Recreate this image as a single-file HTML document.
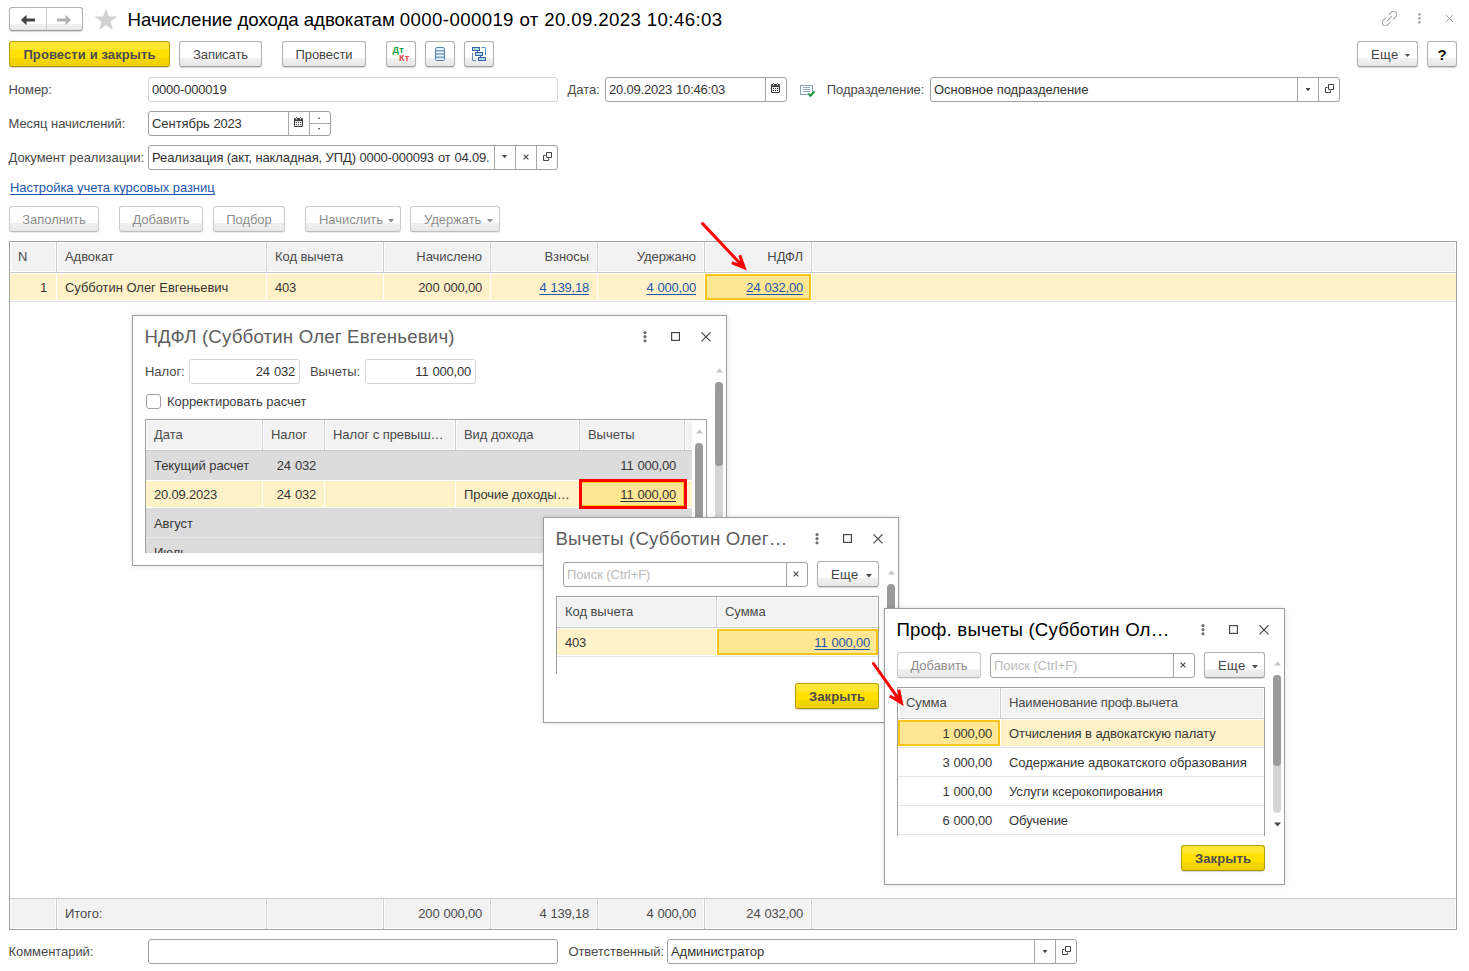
<!DOCTYPE html>
<html lang="ru">
<head>
<meta charset="utf-8">
<title>Начисление дохода адвокатам</title>
<style>
*{box-sizing:border-box;margin:0;padding:0}
html,body{width:1469px;height:971px;overflow:hidden;background:#fff}
body{font-family:"Liberation Sans",Arial,sans-serif;font-size:13px;color:#363636;letter-spacing:-.05px;position:relative}
.abs{position:absolute}
.t{position:absolute;white-space:nowrap;line-height:16px;height:16px}
.lbl{color:#4a4a4a}
.btn{position:absolute;height:26px;border:1px solid #b0b0b0;border-bottom-color:#9c9c9c;border-radius:3px;
 background:linear-gradient(#fff 0,#fff 66.6%,#f1f1f1 66.7%,#e7e7e7 100%);box-shadow:0 1px 1px rgba(0,0,0,.16);
 text-align:center;line-height:25px;color:#444;white-space:nowrap}
.btn.dis{color:#8c8c8c;border-color:#cbcbcb;border-bottom-color:#bdbdbd;box-shadow:0 1px 1px rgba(0,0,0,.08)}
.btn.y{background:linear-gradient(#ffe83a 0,#ffe52c 31%,#ffe000 33%,#ffe000 66.6%,#f3d600 66.7%,#efd100 100%);border-color:#b8a000;border-bottom-color:#a89200;font-weight:bold;color:#4c4c4c;letter-spacing:.1px}
.inp{position:absolute;height:25px;border:1px solid #a0a0a0;border-radius:3px;background:#fff;line-height:24px;padding-left:3px;white-space:nowrap;overflow:hidden;color:#333}
.inp.lt{border-color:#d4d4d4}
.inp .sep{position:absolute;top:0;bottom:0;width:1px;background:#a8a8a8}
.arr{position:absolute;width:6px;height:3.5px;color:#4d4d4d;background:currentColor;clip-path:polygon(0 0,100% 0,50% 100%)}
.arr.s{width:5px;height:3.2px;color:#444}
a.lnk{color:#2456ae;text-decoration:underline;text-decoration-skip-ink:none;text-underline-offset:1.5px;text-decoration-thickness:1px}
.hdr{position:absolute;background:#f2f2f2;color:#4f4f4f;line-height:29px;height:29px;white-space:nowrap;overflow:hidden}
.cell{position:absolute;white-space:nowrap;overflow:hidden}
.r{text-align:right}
.num{letter-spacing:-.2px;word-spacing:.6px}
.win{position:absolute;background:#fff;border:1px solid #9e9e9e;box-shadow:0 0 5px rgba(0,0,0,.13)}
.wt{position:absolute;white-space:nowrap;font-size:18.67px;line-height:24px;height:24px;color:#5e5e5e;letter-spacing:.17px;margin-left:-.6px}
</style>
</head>
<body>

<!-- ===== title bar ===== -->
<div class="btn" style="left:9px;top:7px;width:74px;height:24px;background:linear-gradient(#fff 0,#fff 72%,#f1f1f1 73%,#e7e7e7 100%)"></div>
<div class="abs" style="left:46px;top:8px;width:1px;height:22px;background:#d0d0d0"></div>
<svg class="abs" style="left:20px;top:13.5px" width="16" height="12" viewBox="0 0 16 12"><path d="M0.8 6 L6.6 0.8 V4.6 H15 V7.4 H6.6 V11.2 Z" fill="#454545"/></svg>
<svg class="abs" style="left:56px;top:13.5px" width="16" height="12" viewBox="0 0 16 12"><path d="M15.2 6 L9.4 0.8 V4.6 H1 V7.4 H9.4 V11.2 Z" fill="#b0b0b0"/></svg>
<svg class="abs" style="left:93.5px;top:7.5px" width="24" height="23" viewBox="0 0 24 23"><path d="M12 0.5 L14.8 8.6 H23.3 L16.4 13.7 L19 22 L12 17 L5 22 L7.6 13.7 L0.7 8.6 H9.2 Z" fill="#d0d0d0"/></svg>
<div class="t" style="left:127.6px;top:8px;font-size:18.67px;line-height:24px;height:24px;color:#000">Начисление дохода адвокатам <span style="letter-spacing:.37px">0000-000019 от 20.09.2023 10:46:03</span></div>

<svg class="abs" style="left:1382px;top:11px" width="15" height="15" viewBox="0 0 15 15"><g transform="rotate(-45 7.5 7.5)" fill="none" stroke="#aaa4a4" stroke-width="1.1" stroke-linecap="round"><path d="M5.2 4.4 H1.6 A3.1 3.1 0 0 0 1.6 10.6 H5.2"/><path d="M9.8 4.4 H13.4 A3.1 3.1 0 0 1 13.4 10.6 H9.8"/><path d="M4.6 7.5 H10.4"/></g></svg>
<svg class="abs" style="left:1418px;top:13px" width="3" height="11" viewBox="0 0 3 11"><g fill="#aaa6a6"><circle cx="1.5" cy="1.4" r="1.3"/><circle cx="1.5" cy="5.4" r="1.3"/><circle cx="1.5" cy="9.4" r="1.3"/></g></svg>
<svg class="abs" style="left:1446px;top:15px" width="7" height="7" viewBox="0 0 7 7"><path d="M0 0 L7 7 M7 0 L0 7" stroke="#a4a0a0" stroke-width="1" fill="none"/></svg>
<!-- ===== command bar ===== -->
<div class="btn y" style="left:9px;top:41px;width:161px">Провести и закрыть</div>
<div class="btn" style="left:179px;top:41px;width:83px">Записать</div>
<div class="btn" style="left:282px;top:41px;width:84px">Провести</div>
<div class="btn" style="left:386px;top:41px;width:30px"></div>
<div class="t" style="left:392.5px;top:45px;font-size:9px;font-weight:bold;color:#0d9a3c;line-height:10px;height:10px;letter-spacing:.3px">Д<span style="font-size:9.2px">т</span></div>
<div class="t" style="left:399px;top:53px;font-size:9px;font-weight:bold;color:#ef4444;line-height:10px;height:10px;letter-spacing:.3px">К<span style="font-size:9.2px">т</span></div>
<div class="btn" style="left:425px;top:41px;width:30px"></div>
<svg class="abs" style="left:435px;top:47px" width="10" height="14" viewBox="0 0 10 14"><rect x="0.5" y="0.5" width="9" height="13" rx="1.2" fill="#c9e8ee" stroke="#5f82b2"/><path d="M0.5 3.8 H9.5 M0.5 7 H9.5 M0.5 10.2 H9.5" stroke="#5f82b2" stroke-width="1"/><path d="M1.5 2.2 H8.5 M1.5 5.4 H8.5 M1.5 8.6 H8.5 M1.5 11.8 H8.5" stroke="#eefafc" stroke-width="1"/></svg>
<div class="btn" style="left:464px;top:41px;width:30px"></div>
<svg class="abs" style="left:472px;top:47px" width="14" height="14" viewBox="0 0 14 14"><path d="M9.5 0.5 H13.5 V8 M0.5 6 V13.5 H4" fill="none" stroke="#5d8fb8" stroke-width="1"/><path d="M5.5 3.5 V5 M8.5 8.5 V10" stroke="#3b63a8" stroke-width="1"/><g fill="#a9dbe3" stroke="#3b63a8" stroke-width="1"><rect x="0.5" y="0.5" width="7" height="3"/><rect x="3.5" y="5.5" width="7" height="3"/><rect x="6.5" y="10.5" width="7" height="3"/></g></svg>
<div class="btn" style="left:1357px;top:41px;width:61px;text-align:left;padding-left:13px"><span style="letter-spacing:.4px">Еще</span></div>
<div class="arr" style="left:1404.5px;top:53.5px"></div>
<div class="btn" style="left:1427px;top:41px;width:30px;font-weight:bold;color:#111;font-size:15px">?</div>


<!-- icons defs -->
<svg width="0" height="0" style="position:absolute">
 <defs>
  <g id="i-open"><path d="M3.5 0.5 H8.5 V5.5 H3.5 Z M2.5 3.5 H0.5 V8.5 H5.5 V6.5" fill="none" stroke="#444" stroke-width="1"/></g>
  <g id="i-x"><path d="M0.6 0.6 L5.4 5.4 M5.4 0.6 L0.6 5.4" fill="none" stroke="#505050" stroke-width="1.25"/></g>
  <g id="i-cal"><rect x="0" y="1" width="9" height="9" rx="1" fill="#3c3c3c"/><rect x="1.1" y="4.1" width="6.8" height="4.9" fill="#fff"/><circle cx="2.5" cy="1.7" r="0.8" fill="#fff"/><circle cx="6.5" cy="1.7" r="0.8" fill="#fff"/><rect x="2.1" y="0" width="0.8" height="1.2" fill="#3c3c3c"/><rect x="6.1" y="0" width="0.8" height="1.2" fill="#3c3c3c"/><g fill="#3c3c3c"><rect x="1.9" y="4.9" width="1.1" height="1.1"/><rect x="3.95" y="4.9" width="1.1" height="1.1"/><rect x="6" y="4.9" width="1.1" height="1.1"/><rect x="1.9" y="7" width="1.1" height="1.1"/><rect x="3.95" y="7" width="1.1" height="1.1"/><rect x="6" y="7" width="1.1" height="1.1"/></g></g>
 </defs>
</svg>

<!-- ===== fields ===== -->
<div class="t lbl" style="left:8.5px;top:82px">Номер:</div>
<div class="inp lt" style="left:148px;top:77px;width:410px"><span class="num">0000-000019</span></div>

<div class="t lbl" style="left:567.5px;top:82px">Дата:</div>
<div class="inp" style="left:605px;top:77px;width:182px"><span class="num">20.09.2023 10:46:03</span><i class="sep" style="left:159px"></i></div>
<svg class="abs" style="left:771px;top:83px" width="9" height="10"><use href="#i-cal"/></svg>
<svg class="abs" style="left:800px;top:85px" width="16" height="13" viewBox="0 0 16 13"><rect x="0.5" y="0.5" width="12" height="9" fill="#fbfcfd" stroke="#86a0ba"/><path d="M3 2.5 H10 M3 4.5 H10 M3 6.5 H10" stroke="#86a0ba" stroke-width="0.9"/><path d="M8.4 8.6 L10.5 10.8 L14.6 6.4" fill="none" stroke="#1b9a33" stroke-width="2"/></svg>
<div class="t lbl" style="left:826.7px;top:82px">Подразделение:</div>
<div class="inp" style="left:930px;top:77px;width:410px">Основное подразделение<i class="sep" style="left:366px"></i><i class="sep" style="left:387px"></i></div>
<div class="arr s" style="left:1305.5px;top:88px"></div>
<svg class="abs" style="left:1325px;top:84px" width="9" height="9"><use href="#i-open"/></svg>

<div class="t lbl" style="left:8.5px;top:116px">Месяц начислений:</div>
<div class="inp" style="left:148px;top:111px;width:183px">Сентябрь <span class="num">2023</span><i class="sep" style="left:139px"></i><i class="sep" style="left:160px"></i><i class="abs" style="left:161px;top:11px;width:21px;height:1px;background:#a8a8a8"></i></div>
<svg class="abs" style="left:294px;top:117px" width="9" height="10"><use href="#i-cal"/></svg>
<div class="abs" style="left:317.8px;top:117px;width:0;height:0;border-left:1.7px solid transparent;border-right:1.7px solid transparent;border-bottom:2.2px solid #4a3a3a"></div>
<div class="abs" style="left:317.8px;top:128px;width:0;height:0;border-left:1.7px solid transparent;border-right:1.7px solid transparent;border-top:2.2px solid #4a3a3a"></div>

<div class="t lbl" style="left:8.5px;top:150px">Документ реализации:</div>
<div class="inp" style="left:148px;top:145px;width:410px"><span style="letter-spacing:-.1px">Реализация (акт, накладная, УПД) </span><span class="num">0000-000093 от 04.09.</span><i class="sep" style="left:345px"></i><i class="sep" style="left:366px"></i><i class="sep" style="left:387px"></i></div>
<div class="arr s" style="left:502px;top:155px"></div>
<svg class="abs" style="left:523px;top:154px" width="6" height="6"><use href="#i-x"/></svg>
<svg class="abs" style="left:543px;top:152px" width="9" height="9"><use href="#i-open"/></svg>

<a class="lnk t" style="left:10px;top:180px">Настройка учета курсовых разниц</a>

<!-- ===== table command bar ===== -->
<div class="btn dis" style="left:9px;top:206px;width:90px">Заполнить</div>
<div class="btn dis" style="left:119px;top:206px;width:84px">Добавить</div>
<div class="btn dis" style="left:213px;top:206px;width:72px">Подбор</div>
<div class="btn dis" style="left:305px;top:206px;width:96px;text-align:left;padding-left:13px">Начислить</div>
<div class="arr" style="left:388px;top:219px;color:#8c8c8c"></div>
<div class="btn dis" style="left:410px;top:206px;width:90px;text-align:left;padding-left:13px">Удержать</div>
<div class="arr" style="left:487px;top:219px;color:#8c8c8c"></div>

<!-- ===== bottom fields ===== -->
<div class="t lbl" style="left:8.5px;top:944px">Комментарий:</div>
<div class="inp" style="left:148px;top:939px;width:410px"></div>
<div class="t lbl" style="left:568.4px;top:944px">Ответственный:</div>
<div class="inp" style="left:667px;top:939px;width:410px">Администратор<i class="sep" style="left:366px"></i><i class="sep" style="left:387px"></i></div>
<div class="arr s" style="left:1042.5px;top:950px"></div>
<svg class="abs" style="left:1062px;top:946px" width="9" height="9"><use href="#i-open"/></svg>


<!-- ===== main table ===== -->
<div class="abs" style="left:9px;top:241px;width:1448px;height:689px;border:1px solid #a0a0a0;background:#fff"></div>
<div class="abs" style="left:11px;top:243px;width:44px;height:28px;background:#f2f2f2"></div>
<div class="abs" style="left:11px;top:899px;width:44px;height:29px;background:#f2f2f2"></div>
<div class="abs" style="left:58px;top:243px;width:207px;height:28px;background:#f2f2f2"></div>
<div class="abs" style="left:58px;top:899px;width:207px;height:29px;background:#f2f2f2"></div>
<div class="abs" style="left:268px;top:243px;width:114px;height:28px;background:#f2f2f2"></div>
<div class="abs" style="left:268px;top:899px;width:114px;height:29px;background:#f2f2f2"></div>
<div class="abs" style="left:385px;top:243px;width:104px;height:28px;background:#f2f2f2"></div>
<div class="abs" style="left:385px;top:899px;width:104px;height:29px;background:#f2f2f2"></div>
<div class="abs" style="left:492px;top:243px;width:104px;height:28px;background:#f2f2f2"></div>
<div class="abs" style="left:492px;top:899px;width:104px;height:29px;background:#f2f2f2"></div>
<div class="abs" style="left:599px;top:243px;width:104px;height:28px;background:#f2f2f2"></div>
<div class="abs" style="left:599px;top:899px;width:104px;height:29px;background:#f2f2f2"></div>
<div class="abs" style="left:706px;top:243px;width:104px;height:28px;background:#f2f2f2"></div>
<div class="abs" style="left:706px;top:899px;width:104px;height:29px;background:#f2f2f2"></div>
<div class="abs" style="left:813px;top:243px;width:642px;height:28px;background:#f2f2f2"></div>
<div class="abs" style="left:813px;top:899px;width:642px;height:29px;background:#f2f2f2"></div>
<div class="abs" style="left:56px;top:242px;width:1px;height:30px;background:#cdcdcd"></div>
<div class="abs" style="left:56px;top:899px;width:1px;height:30px;background:#cdcdcd"></div>
<div class="abs" style="left:266px;top:242px;width:1px;height:30px;background:#cdcdcd"></div>
<div class="abs" style="left:266px;top:899px;width:1px;height:30px;background:#cdcdcd"></div>
<div class="abs" style="left:383px;top:242px;width:1px;height:30px;background:#cdcdcd"></div>
<div class="abs" style="left:383px;top:899px;width:1px;height:30px;background:#cdcdcd"></div>
<div class="abs" style="left:490px;top:242px;width:1px;height:30px;background:#cdcdcd"></div>
<div class="abs" style="left:490px;top:899px;width:1px;height:30px;background:#cdcdcd"></div>
<div class="abs" style="left:597px;top:242px;width:1px;height:30px;background:#cdcdcd"></div>
<div class="abs" style="left:597px;top:899px;width:1px;height:30px;background:#cdcdcd"></div>
<div class="abs" style="left:704px;top:242px;width:1px;height:30px;background:#cdcdcd"></div>
<div class="abs" style="left:704px;top:899px;width:1px;height:30px;background:#cdcdcd"></div>
<div class="abs" style="left:811px;top:242px;width:1px;height:30px;background:#cdcdcd"></div>
<div class="abs" style="left:811px;top:899px;width:1px;height:30px;background:#cdcdcd"></div>
<div class="abs" style="left:10px;top:272px;width:1446px;height:1px;background:#c9c9c9"></div>
<div class="abs" style="left:10px;top:898px;width:1446px;height:1px;background:#c9c9c9"></div>
<div class="abs" style="left:10px;top:274px;width:1446px;height:26px;background:#fff2c8"></div>
<div class="abs" style="left:56px;top:274px;width:1px;height:26px;background:#fff"></div>
<div class="abs" style="left:266px;top:274px;width:1px;height:26px;background:#fff"></div>
<div class="abs" style="left:383px;top:274px;width:1px;height:26px;background:#fff"></div>
<div class="abs" style="left:490px;top:274px;width:1px;height:26px;background:#fff"></div>
<div class="abs" style="left:597px;top:274px;width:1px;height:26px;background:#fff"></div>
<div class="abs" style="left:704px;top:274px;width:1px;height:26px;background:#fff"></div>
<div class="abs" style="left:811px;top:274px;width:1px;height:26px;background:#fff"></div>
<div class="abs" style="left:10px;top:301px;width:1446px;height:1px;background:#e6e6e6"></div>
<div class="abs" style="left:705px;top:274px;width:106px;height:26px;background:#ffe794;border:2px solid #f8c51c"></div>
<div class="t " style="left:18px;top:249px;color:#4a4a4a">N</div>
<div class="t " style="left:65px;top:249px;color:#4a4a4a">Адвокат</div>
<div class="t " style="left:275px;top:249px;color:#4a4a4a">Код вычета</div>
<div class="t r " style="right:987px;top:249px;color:#4a4a4a">Начислено</div>
<div class="t r " style="right:880px;top:249px;color:#4a4a4a">Взносы</div>
<div class="t r " style="right:773px;top:249px;color:#4a4a4a">Удержано</div>
<div class="t r " style="right:666px;top:249px;color:#4a4a4a">НДФЛ</div>
<div class="t r num" style="right:1422px;top:280px;">1</div>
<div class="t " style="left:65px;top:280px;">Субботин Олег Евгеньевич</div>
<div class="t num" style="left:275px;top:280px;">403</div>
<div class="t r num" style="right:987px;top:280px;">200 000,00</div>
<div class="t r num" style="right:880px;top:280px;"><a class="lnk">4 139,18</a></div>
<div class="t r num" style="right:773px;top:280px;"><a class="lnk">4 000,00</a></div>
<div class="t r num" style="right:666px;top:280px;"><a class="lnk">24 032,00</a></div>
<div class="t " style="left:65px;top:906px;color:#4a4a4a">Итого:</div>
<div class="t r num" style="right:987px;top:906px;color:#4a4a4a">200 000,00</div>
<div class="t r num" style="right:880px;top:906px;color:#4a4a4a">4 139,18</div>
<div class="t r num" style="right:773px;top:906px;color:#4a4a4a">4 000,00</div>
<div class="t r num" style="right:666px;top:906px;color:#4a4a4a">24 032,00</div>

<div class="win" style="left:132px;top:315px;width:595px;height:251px;z-index:10">
<div class="t wt" style="left:12px;top:9px;">НДФЛ (Субботин Олег Евгеньевич)</div>
<svg class="abs" style="left:509.6px;top:15px" width="4" height="12" viewBox="0 0 4 12"><g fill="#707070"><circle cx="2" cy="1.6" r="1.6"/><circle cx="2" cy="5.7" r="1.6"/><circle cx="2" cy="9.8" r="1.6"/></g></svg>
<svg class="abs" style="left:538px;top:16px" width="9" height="9" viewBox="0 0 9 9"><rect x="0.6" y="0.6" width="7.8" height="7.8" fill="none" stroke="#4a4a4a" stroke-width="1.2"/></svg>
<svg class="abs" style="left:568px;top:16px" width="10" height="10" viewBox="0 0 10 10"><path d="M0.5 0.3 L9.5 9.3 M9.5 0.3 L0.5 9.3" stroke="#4a4a4a" stroke-width="1.15" fill="none"/></svg>
<div class="t lbl" style="left:12px;top:48px;">Налог:</div>
<div class="inp lt num r" style="left:56px;top:43px;width:111px;padding-right:4px">24 032</div>
<div class="t lbl" style="left:177px;top:48px;">Вычеты:</div>
<div class="inp lt num r" style="left:232px;top:43px;width:111px;padding-right:4px">11 000,00</div>
<div class="abs" style="left:13px;top:78px;width:15px;height:15px;border:1px solid #a0a0a0;border-radius:3px;background:#fff"></div>
<div class="t " style="left:34px;top:78px;color:#3c3c3c">Корректировать расчет</div>
<svg class="abs" style="left:582.5px;top:51.69999999999999px" width="7" height="5" viewBox="0 0 7 5"><path d="M0 4.5 L3.5 0.5 L7 4.5 Z" fill="#c4c4c4"/></svg>
<div class="abs" style="left:582px;top:66px;width:8px;height:170px;background:#d4d4d4;border-radius:4px"></div>
<div class="abs" style="left:582px;top:66px;width:8px;height:84px;background:#9a9a9a;border-radius:4px"></div>
<div class="abs" style="left:12px;top:103px;width:562px;height:134px;border:1px solid #a0a0a0;border-bottom:none;background:#fff"></div>
<div class="abs" style="left:14px;top:105px;width:114px;height:28px;background:#f2f2f2"></div>
<div class="abs" style="left:131px;top:105px;width:59px;height:28px;background:#f2f2f2"></div>
<div class="abs" style="left:193px;top:105px;width:128px;height:28px;background:#f2f2f2"></div>
<div class="abs" style="left:324px;top:105px;width:121px;height:28px;background:#f2f2f2"></div>
<div class="abs" style="left:448px;top:105px;width:102px;height:28px;background:#f2f2f2"></div>
<div class="abs" style="left:553px;top:105px;width:6px;height:28px;background:#f2f2f2"></div>
<div class="abs" style="left:129px;top:104px;width:1px;height:30px;background:#cdcdcd"></div>
<div class="abs" style="left:191px;top:104px;width:1px;height:30px;background:#cdcdcd"></div>
<div class="abs" style="left:322px;top:104px;width:1px;height:30px;background:#cdcdcd"></div>
<div class="abs" style="left:446px;top:104px;width:1px;height:30px;background:#cdcdcd"></div>
<div class="abs" style="left:551px;top:104px;width:1px;height:30px;background:#cdcdcd"></div>
<div class="t " style="left:21px;top:111px;color:#4a4a4a">Дата</div>
<div class="t " style="left:138px;top:111px;color:#4a4a4a">Налог</div>
<div class="t " style="left:200px;top:111px;color:#4a4a4a">Налог с превыш…</div>
<div class="t " style="left:331px;top:111px;color:#4a4a4a">Вид дохода</div>
<div class="t " style="left:455px;top:111px;color:#4a4a4a">Вычеты</div>
<div class="abs" style="left:13px;top:134px;width:546px;height:1px;background:#c9c9c9"></div>
<div class="abs" style="left:13px;top:135px;width:546px;height:29px;background:#dcdcdc"></div>
<div class="abs" style="left:13px;top:165px;width:546px;height:26px;background:#fff2c8"></div>
<div class="abs" style="left:129px;top:165px;width:1px;height:26px;background:#fff"></div>
<div class="abs" style="left:191px;top:165px;width:1px;height:26px;background:#fff"></div>
<div class="abs" style="left:322px;top:165px;width:1px;height:26px;background:#fff"></div>
<div class="abs" style="left:446px;top:165px;width:1px;height:26px;background:#fff"></div>
<div class="abs" style="left:551px;top:165px;width:1px;height:26px;background:#fff"></div>
<div class="abs" style="left:13px;top:192px;width:546px;height:29px;background:#dcdcdc"></div>
<div class="abs" style="left:13px;top:221px;width:546px;height:1px;background:#e8e8e8"></div>
<div class="abs" style="left:13px;top:222px;width:546px;height:15px;background:#dcdcdc"></div>
<svg class="abs" style="left:562.5px;top:112.69999999999999px" width="7" height="5" viewBox="0 0 7 5"><path d="M0 4.5 L3.5 0.5 L7 4.5 Z" fill="#c4c4c4"/></svg>
<div class="abs" style="left:562px;top:127px;width:8px;height:100px;background:#9a9a9a;border-radius:4px"></div>
<div class="t " style="left:21px;top:142px;">Текущий расчет</div>
<div class="t r num" style="right:410px;top:142px;">24 032</div>
<div class="t r num" style="right:50px;top:142px;">11 000,00</div>
<div class="t num" style="left:21px;top:171px;">20.09.2023</div>
<div class="t r num" style="right:410px;top:171px;">24 032</div>
<div class="t " style="left:331px;top:171px;">Прочие доходы…</div>
<div class="abs" style="left:447px;top:165px;width:105px;height:26px;background:#ffe794;border:2px solid #f8c51c"></div>
<div class="abs" style="left:446px;top:163px;width:108px;height:30px;border:3px solid #ff0000"></div>
<div class="t r num" style="right:50px;top:171px;"><a class="lnk" style="color:#333">11 000,00</a></div>
<div class="t " style="left:21px;top:200px;">Август</div>
<div class="abs" style="left:13px;top:224px;width:200px;height:13px;overflow:hidden"><div class="t" style="left:8px;top:5px">Июль</div></div>
</div>

<div class="win" style="left:543px;top:517px;width:356px;height:206px;z-index:20">
<div class="t wt" style="left:12px;top:9px;">Вычеты (Субботин Олег…</div>
<svg class="abs" style="left:270.5px;top:15px" width="4" height="12" viewBox="0 0 4 12"><g fill="#707070"><circle cx="2" cy="1.6" r="1.6"/><circle cx="2" cy="5.7" r="1.6"/><circle cx="2" cy="9.8" r="1.6"/></g></svg>
<svg class="abs" style="left:299px;top:16px" width="9" height="9" viewBox="0 0 9 9"><rect x="0.6" y="0.6" width="7.8" height="7.8" fill="none" stroke="#4a4a4a" stroke-width="1.2"/></svg>
<svg class="abs" style="left:329px;top:16px" width="10" height="10" viewBox="0 0 10 10"><path d="M0.5 0.3 L9.5 9.3 M9.5 0.3 L0.5 9.3" stroke="#4a4a4a" stroke-width="1.15" fill="none"/></svg>
<div class="inp " style="left:19px;top:44px;width:245px;"><span style="color:#b9b9b9">Поиск (Ctrl+F)</span><i class="sep" style="left:222px"></i></div>
<svg class="abs" style="left:249px;top:53px" width="6" height="6" viewBox="0 0 6 6"><use href="#i-x"/></svg>
<div class="btn " style="left:273px;top:43px;width:62px;height:26px;text-align:left;padding-left:13px"><span style="letter-spacing:.4px">Еще</span></div>
<div class="arr" style="left:322px;top:56px;color:#4d4d4d"></div>
<svg class="abs" style="left:344px;top:52px" width="7" height="5" viewBox="0 0 7 5"><path d="M0 4.5 L3.5 0.5 L7 4.5 Z" fill="#c4c4c4"/></svg>
<div class="abs" style="left:343px;top:66px;width:8px;height:60px;background:#9a9a9a;border-radius:4px"></div>
<div class="abs" style="left:12px;top:78px;width:323px;height:78px;border:1px solid #a0a0a0;border-bottom:none;background:#fff"></div>
<div class="abs" style="left:14px;top:80px;width:157px;height:28px;background:#f2f2f2"></div>
<div class="abs" style="left:174px;top:80px;width:159px;height:28px;background:#f2f2f2"></div>
<div class="abs" style="left:172px;top:79px;width:1px;height:30px;background:#cdcdcd"></div>
<div class="t " style="left:21px;top:86px;color:#4a4a4a">Код вычета</div>
<div class="t " style="left:181px;top:86px;color:#4a4a4a">Сумма</div>
<div class="abs" style="left:13px;top:109px;width:321px;height:1px;background:#c9c9c9"></div>
<div class="abs" style="left:13px;top:111px;width:321px;height:26px;background:#fff2c8"></div>
<div class="abs" style="left:172px;top:111px;width:1px;height:26px;background:#fff"></div>
<div class="abs" style="left:13px;top:138px;width:321px;height:1px;background:#e6e6e6"></div>
<div class="abs" style="left:173px;top:111px;width:161px;height:26px;background:#ffe794;border:2px solid #f8c51c"></div>
<div class="t num" style="left:21px;top:117px;">403</div>
<div class="t r num" style="right:28px;top:117px;"><a class="lnk">11 000,00</a></div>
<div class="btn y" style="left:251px;top:165px;width:84px;height:26px;">Закрыть</div>
</div>

<div class="win" style="left:884px;top:608px;width:401px;height:277px;z-index:30">
<div class="t wt" style="left:12px;top:9px;color:#000">Проф. вычеты (Субботин Ол…</div>
<svg class="abs" style="left:315.5px;top:15px" width="4" height="12" viewBox="0 0 4 12"><g fill="#707070"><circle cx="2" cy="1.6" r="1.6"/><circle cx="2" cy="5.7" r="1.6"/><circle cx="2" cy="9.8" r="1.6"/></g></svg>
<svg class="abs" style="left:344px;top:16px" width="9" height="9" viewBox="0 0 9 9"><rect x="0.6" y="0.6" width="7.8" height="7.8" fill="none" stroke="#4a4a4a" stroke-width="1.2"/></svg>
<svg class="abs" style="left:374px;top:16px" width="10" height="10" viewBox="0 0 10 10"><path d="M0.5 0.3 L9.5 9.3 M9.5 0.3 L0.5 9.3" stroke="#4a4a4a" stroke-width="1.15" fill="none"/></svg>
<div class="btn dis" style="left:12px;top:43px;width:84px;height:26px;">Добавить</div>
<div class="inp " style="left:105px;top:44px;width:205px;"><span style="color:#b9b9b9">Поиск (Ctrl+F)</span><i class="sep" style="left:182px"></i></div>
<svg class="abs" style="left:295px;top:53px" width="6" height="6" viewBox="0 0 6 6"><use href="#i-x"/></svg>
<div class="btn " style="left:319px;top:43px;width:61px;height:26px;text-align:left;padding-left:13px"><span style="letter-spacing:.4px">Еще</span></div>
<div class="arr" style="left:367px;top:56px;color:#4d4d4d"></div>
<svg class="abs" style="left:389px;top:52px" width="7" height="5" viewBox="0 0 7 5"><path d="M0 4.5 L3.5 0.5 L7 4.5 Z" fill="#c4c4c4"/></svg>
<div class="abs" style="left:388px;top:66px;width:8px;height:138px;background:#d4d4d4;border-radius:4px"></div>
<div class="abs" style="left:388px;top:66px;width:8px;height:91px;background:#9a9a9a;border-radius:4px"></div>
<svg class="abs" style="left:389px;top:213px" width="7" height="5" viewBox="0 0 7 5"><path d="M0 0.5 L3.5 4.5 L7 0.5 Z" fill="#444"/></svg>
<div class="abs" style="left:12px;top:78px;width:368px;height:149px;border:1px solid #a0a0a0;border-bottom:none;background:#fff"></div>
<div class="abs" style="left:14px;top:80px;width:100px;height:28px;background:#f2f2f2"></div>
<div class="abs" style="left:117px;top:80px;width:261px;height:28px;background:#f2f2f2"></div>
<div class="abs" style="left:115px;top:79px;width:1px;height:30px;background:#cdcdcd"></div>
<div class="t " style="left:21px;top:86px;color:#4a4a4a">Сумма</div>
<div class="t " style="left:124px;top:86px;color:#4a4a4a"><span style="letter-spacing:-.15px">Наименование проф.вычета</span></div>
<div class="abs" style="left:13px;top:109px;width:366px;height:1px;background:#c9c9c9"></div>
<div class="abs" style="left:13px;top:111px;width:366px;height:26px;background:#fff2c8"></div>
<div class="abs" style="left:115px;top:111px;width:1px;height:26px;background:#fff"></div>
<div class="abs" style="left:13px;top:111px;width:102px;height:26px;background:#ffe794;border:2px solid #f8c51c"></div>
<div class="t r num" style="right:292px;top:117px;">1 000,00</div>
<div class="t " style="left:124px;top:117px;">Отчисления в адвокатскую палату</div>
<div class="abs" style="left:13px;top:138px;width:366px;height:1px;background:#e6e6e6"></div>
<div class="t r num" style="right:292px;top:146px;">3 000,00</div>
<div class="t " style="left:124px;top:146px;">Содержание адвокатского образования</div>
<div class="abs" style="left:13px;top:167px;width:366px;height:1px;background:#e6e6e6"></div>
<div class="t r num" style="right:292px;top:175px;">1 000,00</div>
<div class="t " style="left:124px;top:175px;">Услуги ксерокопирования</div>
<div class="abs" style="left:13px;top:196px;width:366px;height:1px;background:#e6e6e6"></div>
<div class="t r num" style="right:292px;top:204px;">6 000,00</div>
<div class="t " style="left:124px;top:204px;">Обучение</div>
<div class="abs" style="left:13px;top:225px;width:366px;height:1px;background:#e6e6e6"></div>
<div class="btn y" style="left:296px;top:236px;width:84px;height:26px;">Закрыть</div>
</div>

<svg class="abs" style="left:690px;top:211px;z-index:5" width="69" height="72"><path d="M12.60 12.60 L49.61 51.95" stroke="#ff0000" stroke-width="3.0" stroke-linecap="round" fill="none"/><path d="M54.27 56.91 L49.82 44.17 L49.61 51.95 L41.82 51.69 Z" fill="#ff0000"/><path d="M49.82 44.17 L54.27 56.91 L41.82 51.69" stroke="#ff0000" stroke-width="3.0" stroke-linejoin="miter" stroke-miterlimit="10" fill="none"/></svg>
<svg class="abs" style="left:861px;top:651px;z-index:40" width="55" height="67"><path d="M12.40 12.50 L36.51 46.35" stroke="#ff0000" stroke-width="3.0" stroke-linecap="round" fill="none"/><path d="M40.46 51.90 L37.78 38.67 L36.51 46.35 L28.83 45.04 Z" fill="#ff0000"/><path d="M37.78 38.67 L40.46 51.90 L28.83 45.04" stroke="#ff0000" stroke-width="3.0" stroke-linejoin="miter" stroke-miterlimit="10" fill="none"/></svg>

</body>
</html>
